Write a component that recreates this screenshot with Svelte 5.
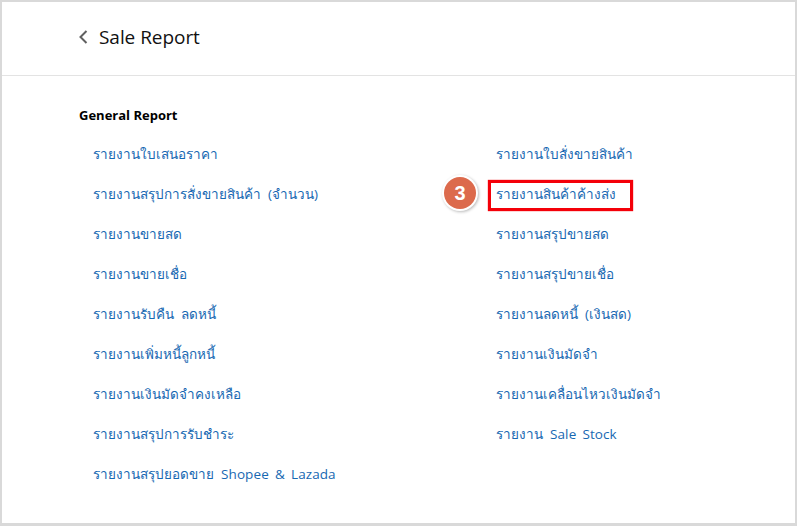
<script>
  const left = ['รายงานใบเสนอราคา','รายงานสรุปการสั่งขายสินค้า (จำนวน)','รายงานขายสด','รายงานขายเชื่อ','รายงานรับคืน ลดหนี้','รายงานเพิ่มหนี้ลูกหนี้','รายงานเงินมัดจำคงเหลือ','รายงานสรุปการรับชำระ','รายงานสรุปยอดขาย Shopee & Lazada'];
  const right = ['รายงานใบสั่งขายสินค้า','รายงานสินค้าค้างส่ง','รายงานสรุปขายสด','รายงานสรุปขายเชื่อ','รายงานลดหนี้ (เงินสด)','รายงานเงินมัดจำ','รายงานเคลื่อนไหวเงินมัดจำ','รายงาน Sale Stock'];
  const parts = (t) => t.split(/([A-Za-z][A-Za-z& ]*)/).filter(Boolean);
  const isLatin = (p) => /^[A-Za-z]/.test(p);
</script>

{#snippet label(t)}
  {#each parts(t) as p}{#if isLatin(p)}<span class="latin">{p}</span>{:else}{p}{/if}{/each}
{/snippet}

<div class="frame">
  <header class="head">
    <svg class="back" width="10" height="16" viewBox="0 0 10 16"><path d="M8.5 2 L2.5 8 L8.5 14" fill="none" stroke="#606060" stroke-width="2"/></svg>
    <h1>Sale Report</h1>
  </header>
  <main class="body">
    <h2>General Report</h2>
    <div class="cols">
      <ul>
        {#each left as t}<li><span class="link">{@render label(t)}</span></li>{/each}
      </ul>
      <ul>
        {#each right as t, i}
          <li>
            <span class="link">{@render label(t)}{#if i === 1}<span class="box"></span><span class="badge">3</span>{/if}</span>
          </li>
        {/each}
      </ul>
    </div>
  </main>
</div>

<style>
  :global(body) { margin: 0; background: #fff; }
  .frame {
    width: 797px; height: 526px; box-sizing: border-box;
    border: 2px solid #d9d9d9; border-bottom-width: 3px;
    background: #fff; font-family: "Open Sans", "Noto Sans", sans-serif; overflow: hidden;
  }
  .head {
    height: 74px; box-sizing: border-box; border-bottom: 1px solid #e3e3e3;
    display: flex; align-items: center; padding: 0 0 3px 76px; gap: 11px;
  }
  h1 { margin: 0; font-size: 19px; font-weight: 400; color: #111; line-height: 1; letter-spacing: -0.05px; }
  .body { padding: 31px 0 0 77px; }
  h2 { margin: 0; font-size: 13px; font-weight: 700; color: #000; line-height: 16px; }
  .cols { display: grid; grid-template-columns: 403px 1fr; margin-top: 11px; padding-left: 14px; }
  ul { list-style: none; margin: 0; padding: 0; }
  li { height: 40px; display: flex; align-items: center; }
  .link { position: relative; font-size: 13.5px; word-spacing: 3.5px; color: #1768b2; line-height: 20px; white-space: nowrap; }
  .latin { font-size: 13.5px; word-spacing: 2.5px; letter-spacing: 0.1px; }
  .box {
    position: absolute; left: -8px; top: -4px; width: 145px; height: 31px; box-sizing: border-box;
    border: 3px solid #f40009; box-shadow: 0 0 1px #f40009;
  }
  .badge {
    position: absolute; left: -52px; top: -7px; width: 32px; height: 32px; border-radius: 50%;
    background: #dc6a4c; color: #fff; font: 700 20px/32px "Liberation Sans", sans-serif; text-align: center;
    box-shadow: 0 0 0 2px #fff, 1px 1px 3px 2px #bbb;
  }
</style>
